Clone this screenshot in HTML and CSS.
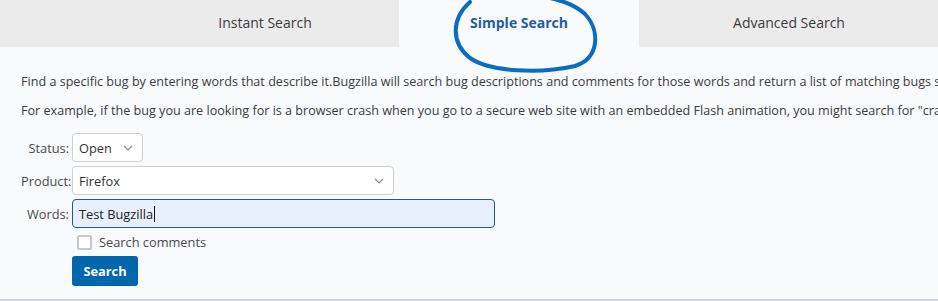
FILE: index.html
```html
<!DOCTYPE html>
<html lang="en">
<head>
<meta charset="utf-8">
<title>Simple Search</title>
<link rel="stylesheet" href="styles.css">
</head>
<body>
<div class="page">
  <nav class="tabs">
    <div class="tab tab-instant">Instant Search</div>
    <div class="tab tab-active">Simple Search</div>
    <div class="tab tab-advanced">Advanced Search</div>
  </nav>
  <svg class="annotation" width="160" height="80" viewBox="445 0 160 80" aria-hidden="true">
    <path d="M470 2 C 452 18, 450 42, 470 58 C 490 72, 540 74, 575 66 C 600 58, 600 30, 585 14 C 570 0, 540 -6, 520 -4" fill="none" stroke="#0b6cc4" stroke-width="4" stroke-linecap="round"/>
  </svg>
  <section class="content">
    <p class="intro">Find a specific bug by entering words that describe it.Bugzilla will search bug descriptions and comments for those words and return a list of matching bugs sorted by relevance.</p>
    <p class="intro">For example, if the bug you are looking for is a browser crash when you go to a secure web site with an embedded Flash animation, you might search for "crash secure SSL flash".</p>
    <form class="form">
      <label class="label">Status:</label>
      <div class="select select-status"><span>Open</span><svg class="chev" width="10" height="6" viewBox="0 0 10 6"><path d="M1 1 L5 5 L9 1" fill="none" stroke="#888" stroke-width="1.2"/></svg></div>
      <label class="label">Product:</label>
      <div class="select select-product"><span>Firefox</span><svg class="chev" width="10" height="6" viewBox="0 0 10 6"><path d="M1 1 L5 5 L9 1" fill="none" stroke="#888" stroke-width="1.2"/></svg></div>
      <label class="label">Words:</label>
      <div class="words"><span>Test Bugzilla</span><span class="caret"></span></div>
      <div class="spacer"></div>
      <div class="check-row"><span class="checkbox"></span><span class="check-label">Search comments</span></div>
      <div class="spacer"></div>
      <div><button type="button" class="btn">Search</button></div>
    </form>
  </section>
</div>
</body>
</html>
```

FILE: styles.css
```css
* { box-sizing: border-box; }
html, body { margin: 0; padding: 0; }
body {
  background: #ffffff;
  font-family: "Open Sans", "Noto Sans", sans-serif;
  color: #3a3a3a;
}
.page {
  position: relative;
  width: 938px;
  height: 301px;
  overflow: hidden;
  background: #f8fafc;
  border-bottom: 2px solid #d3d6da;
}
.tabs {
  display: flex;
  height: 47px;
  background: #ebebeb;
  padding-left: 131px;
  overflow: hidden;
}
.tab {
  flex: none;
  display: flex;
  align-items: center;
  justify-content: center;
  font-size: 14px;
  color: #3c3c3c;
  padding-bottom: 2px;
}
.tab-instant { width: 268px; }
.tab-active {
  width: 240px;
  background: #f8fafc;
  color: #1f5f9f;
  font-weight: 700;
}
.tab-advanced { width: 300px; }
.annotation {
  position: absolute;
  left: 445px;
  top: 0;
}
.content {
  padding: 0 0 0 21px;
}
.intro {
  margin: 0;
  font-size: 12.6px;
  line-height: 29px;
  white-space: nowrap;
  color: #3c3c3c;
}
.intro:first-child { margin-top: 20px; }
.form {
  display: grid;
  grid-template-columns: 48px auto;
  column-gap: 3px;
  row-gap: 4px;
  justify-content: start;
  align-items: center;
  margin-top: 8px;
  font-size: 12.8px;
}
.label {
  text-align: right;
  color: #4a4a4a;
}
.select {
  height: 29px;
  background: #ffffff;
  border: 1px solid #cfcfcf;
  border-radius: 4px;
  display: flex;
  align-items: center;
  justify-content: space-between;
  padding: 0 9px 0 6px;
  color: #333;
}
.select-status { width: 71px; }
.select-product { width: 322px; }
.chev { flex: none; }
.words {
  width: 423px;
  height: 29px;
  background: #e8f0fe;
  border: 1px solid #1f5b84;
  border-radius: 4px;
  display: flex;
  align-items: center;
  padding: 0 6px;
  color: #222;
}
.caret {
  display: inline-block;
  width: 1px;
  height: 16px;
  background: #111;
  margin-left: 1px;
}
.check-row {
  display: flex;
  align-items: center;
  height: 20px;
  padding-left: 5px;
}
.checkbox {
  width: 15px;
  height: 15px;
  border: 2px solid #c7c7c7;
  border-radius: 2px;
  background: #fff;
}
.check-label {
  margin-left: 7px;
  color: #4a4a4a;
}
.btn {
  display: block;
  width: 66px;
  height: 30px;
  border: none;
  border-radius: 3px;
  background: #0067ad;
  color: #ffffff;
  font-family: inherit;
  font-size: 12.8px;
  font-weight: 700;
  padding: 0;
}
```
